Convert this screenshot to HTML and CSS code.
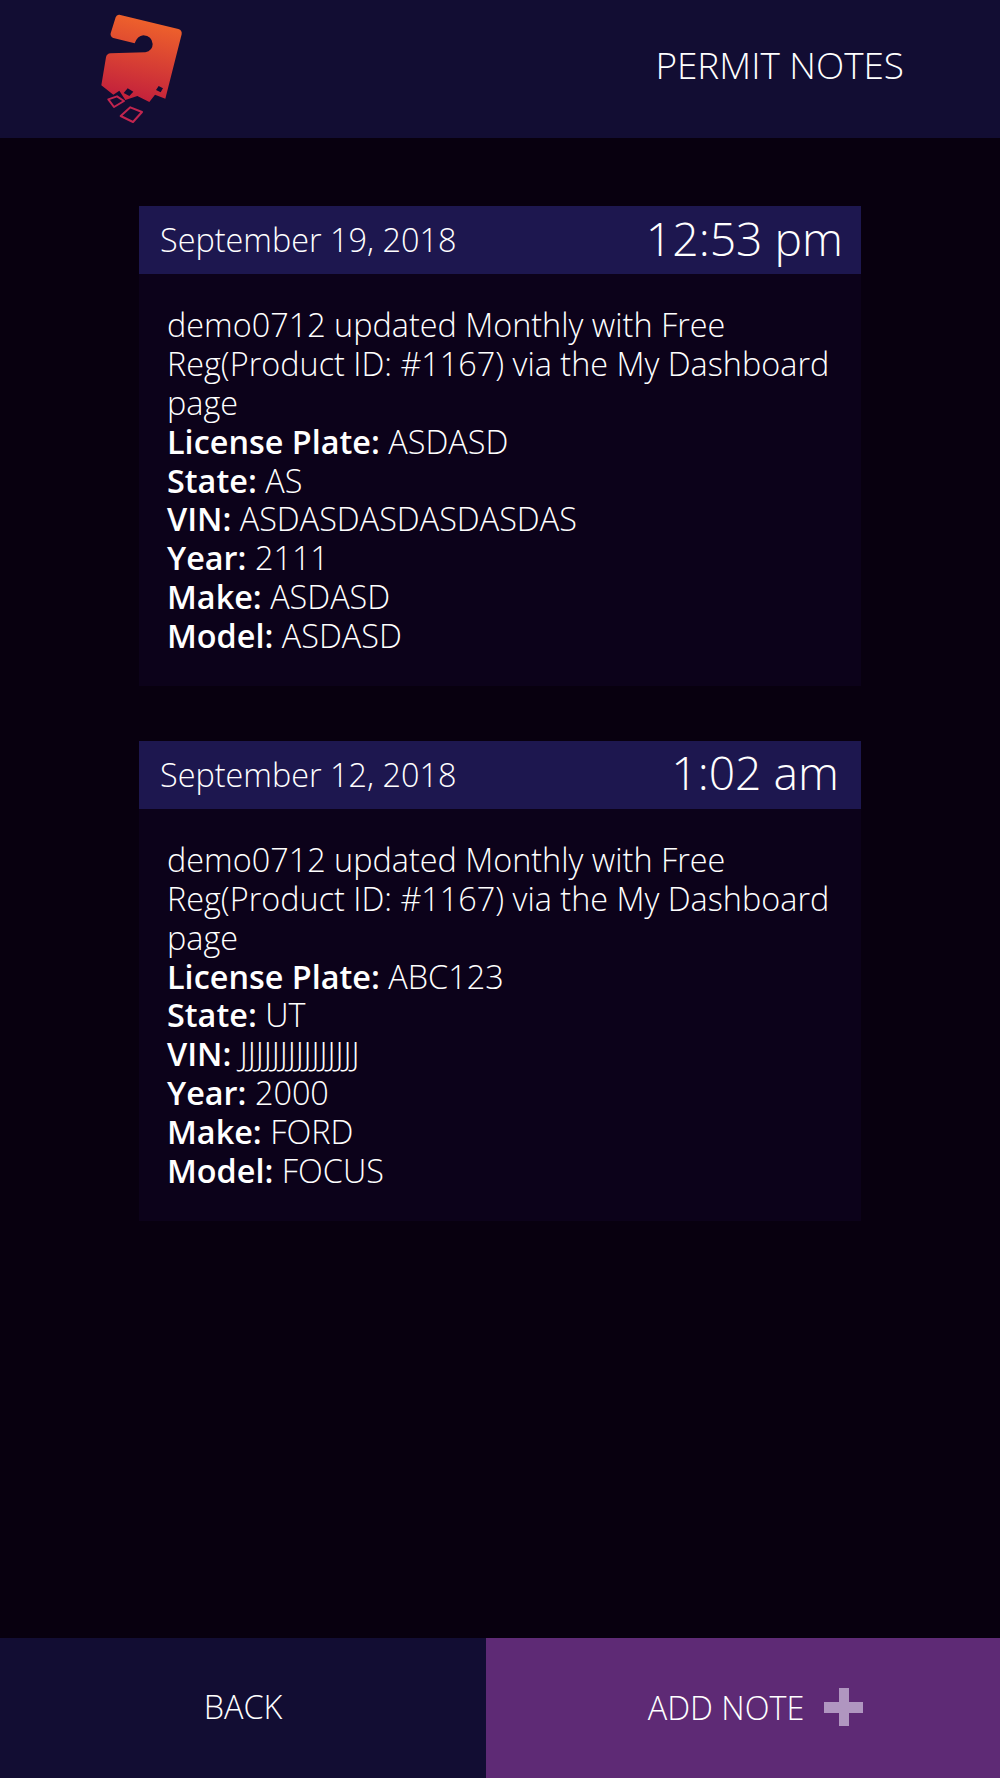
FILE: index.html
```html
<!DOCTYPE html>
<html lang="en">
<head>
    <meta charset="UTF-8">
    <meta name="viewport" content="width=device-width, initial-scale=1.0">
    <title>Permit Notes</title>
    <link rel="stylesheet" href="styles.css">
</head>
<body>
    <div class="page">
        <div class="top-bar">
            <svg class="logo" viewBox="0 0 480 420" width="160" height="140">
                <defs>
                    <linearGradient id="tagFill" x1="0.62" y1="0" x2="0.42" y2="1">
                        <stop offset="0" stop-color="#f1662a"/>
                        <stop offset="1" stop-color="#c21f3c"/>
                    </linearGradient>
                </defs>
                <path fill="url(#tagFill)" fill-rule="evenodd" d="M178 44 L355 87 Q367 91 365 103 L316 296 L285 284 L268 306 L232 288 L196 300 L178 272 L160 284 L124 256 L138 172 Q140 161 152 160 L256 157 Q278 152 278 132 Q276 108 250 106 Q232 108 224 130 L160 114 Q150 110 152 100 L167 52 Q170 43 178 44 Z M296 258 L309 265 L302 277 L288 270 Z M203 265 L220 275 L208 288 L191 279 Z"/>
                <path fill="none" stroke="#c2254f" stroke-width="6" stroke-linejoin="round" d="M171 289 L192 303 L162 321 L145 298 Z"/>
                <path fill="none" stroke="#c2254f" stroke-width="6" stroke-linejoin="round" d="M211 322 L246 336 L219 366 L182 348 Z"/>
            </svg>
            <div class="page-title">PERMIT NOTES</div>
        </div>

        <div class="notes">
            <div class="note">
                <div class="note-head">
                    <span class="note-date">September 19, 2018</span>
                    <span class="note-time">12:53 pm</span>
                </div>
                <div class="note-body">
                    demo0712 updated Monthly with Free Reg(Product ID: #1167) via the My Dashboard page<br>
                    <b>License Plate:</b> ASDASD<br>
                    <b>State:</b> AS<br>
                    <b>VIN:</b> ASDASDASDASDASDAS<br>
                    <b>Year:</b> 2111<br>
                    <b>Make:</b> ASDASD<br>
                    <b>Model:</b> ASDASD
                </div>
            </div>

            <div class="note">
                <div class="note-head">
                    <span class="note-date">September 12, 2018</span>
                    <span class="note-time second">1:02 am</span>
                </div>
                <div class="note-body">
                    demo0712 updated Monthly with Free Reg(Product ID: #1167) via the My Dashboard page<br>
                    <b>License Plate:</b> ABC123<br>
                    <b>State:</b> UT<br>
                    <b>VIN:</b> JJJJJJJJJJJJJJJ<br>
                    <b>Year:</b> 2000<br>
                    <b>Make:</b> FORD<br>
                    <b>Model:</b> FOCUS
                </div>
            </div>
        </div>

        <div class="bottom-bar">
            <div class="back-button">BACK</div>
            <div class="add-button">
                <span>ADD NOTE</span>
                <span class="plus"></span>
            </div>
        </div>
    </div>
</body>
</html>
```

FILE: styles.css
```css
* {
    margin: 0;
    padding: 0;
    box-sizing: border-box;
}

body {
    font-family: 'Open Sans', 'Noto Sans', sans-serif;
    font-weight: 300;
    background: #08000f;
    color: white;
}

.page {
    height: 1778px;
    display: flex;
    flex-direction: column;
}

.top-bar {
    height: 138px;
    background: #120d33;
    display: flex;
    justify-content: space-between;
    align-items: center;
    padding: 0 96px 8px 60px;
}

.logo {
    display: block;
    margin-top: 10px;
}

.page-title {
    font-size: 36.9px;
}

.notes {
    flex: 1;
    padding: 68px 139px 0;
}

.note {
    background: #0c021a;
    margin-bottom: 55px;
}

.note-head {
    height: 68px;
    background: #1d174f;
    display: flex;
    justify-content: space-between;
    align-items: center;
    padding: 0 18px 2px 21px;
}

.note-date {
    font-size: 32.4px;
}

.note-time {
    font-size: 46.3px;
    padding-bottom: 2px;
}

.note-time.second {
    padding-right: 4px;
}

.note-body {
    padding: 31px 29px 31px 28px;
    font-size: 32.4px;
    line-height: 1.2;
}

.note-body b {
    font-weight: 600;
}

.bottom-bar {
    height: 140px;
    display: flex;
}

.back-button {
    width: 486px;
    background: #120d33;
    display: flex;
    justify-content: center;
    align-items: center;
    padding-bottom: 4px;
    font-size: 32.4px;
}

.add-button {
    flex: 1;
    background: #5e2a75;
    display: flex;
    justify-content: center;
    align-items: center;
    gap: 20px;
    padding: 0 0 2px 25px;
    font-size: 32.4px;
}

.plus {
    width: 39px;
    height: 38px;
    background:
        linear-gradient(#b096c0, #b096c0) center / 10px 100% no-repeat,
        linear-gradient(#b096c0, #b096c0) center / 100% 11px no-repeat;
}
```
